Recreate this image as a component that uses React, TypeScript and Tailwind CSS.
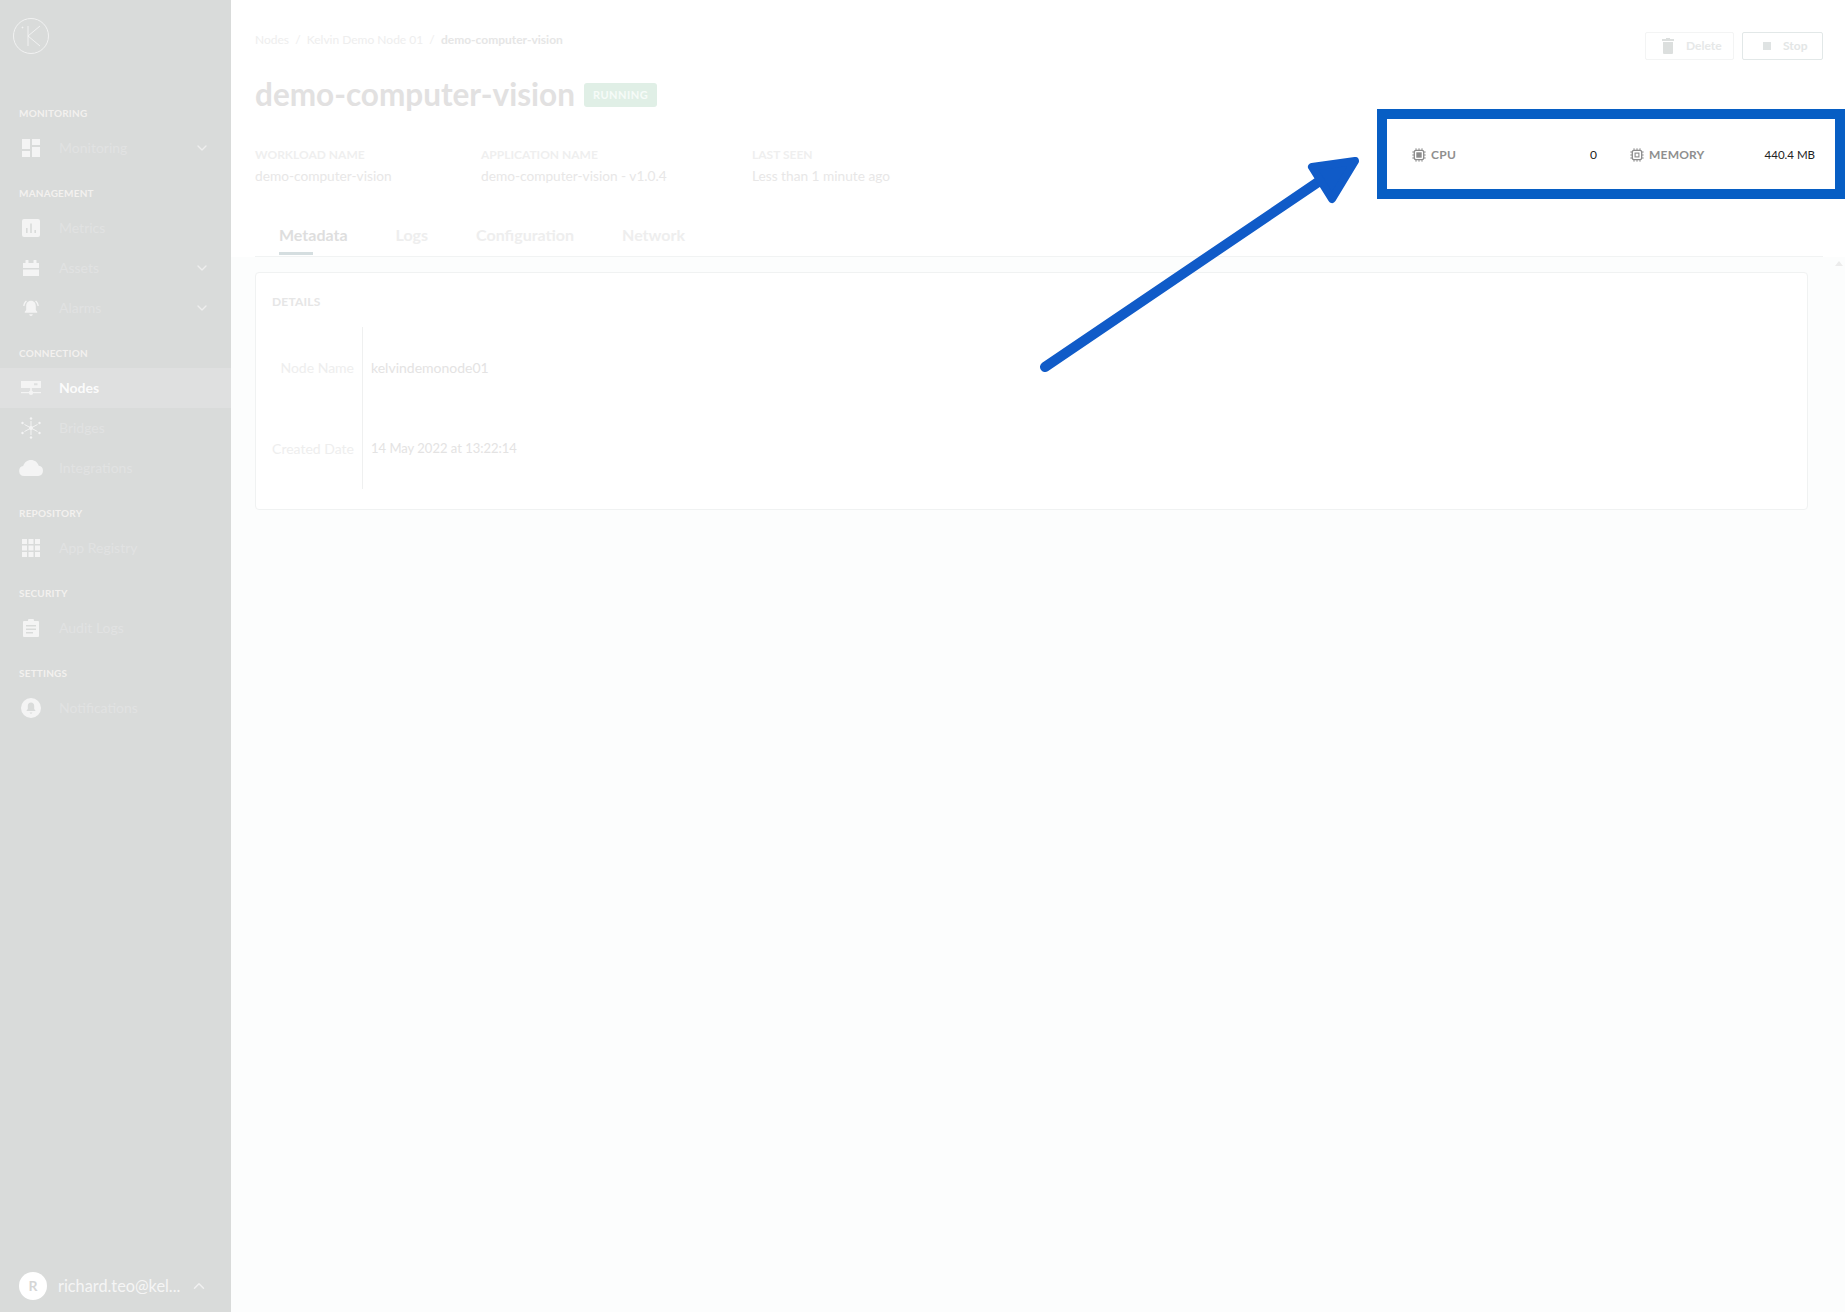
import React from "react";
import { ChevronDown, ChevronUp } from "lucide-react";

type NavItem = { label: string; icon: React.ReactNode; chevron?: boolean; active?: boolean };
type NavSection = { title: string; items: NavItem[] };

const IconDashboard = () => (
  <svg width="18" height="18" viewBox="0 0 18 18" fill="currentColor">
    <rect x="0" y="0" width="8" height="10" />
    <rect x="10" y="0" width="8" height="6" />
    <rect x="0" y="12" width="8" height="6" />
    <rect x="10" y="8" width="8" height="10" />
  </svg>
);

const IconMetrics = () => (
  <svg width="18" height="18" viewBox="0 0 18 18">
    <rect width="18" height="18" rx="2" fill="currentColor" />
    <rect x="4" y="9" width="1.6" height="5" fill="#d9dbda" />
    <rect x="8.2" y="4.5" width="1.6" height="9.5" fill="#d9dbda" />
    <rect x="12.4" y="11" width="1.6" height="3" fill="#d9dbda" />
  </svg>
);

const IconAssets = () => (
  <svg width="16" height="16" viewBox="0 0 16 16" fill="currentColor">
    <path d="M0 3h2.500V.5a.5.5 0 0 1 .5-.5h2a.5.5 0 0 1 .5.5V3h5V.5a.5.5 0 0 1 .5-.5h2a.5.5 0 0 1 .5.5V3H16v5H0z" />
    <rect x="0" y="9.500" width="16" height="6.500" />
  </svg>
);

const IconAlarm = () => (
  <svg width="16" height="16" viewBox="0 0 16 16" fill="currentColor">
    <path d="M8 .8c3 0 4.800 2.400 4.800 5.400v3.800l1.400 1.700v1.100H1.800v-1.100l1.400-1.700V6.200C3.200 3.200 5 .8 8 .8z" />
    <path d="M6.300 14.200h3.400c0 1-.8 1.700-1.700 1.700s-1.700-.7-1.700-1.700z" />
    <path d="M3 .6l.9 1C2.500 2.800 1.700 4.300 1.500 6L.2 5.900C.4 3.700 1.500 1.800 3 .6zM13 .6c1.500 1.200 2.600 3.100 2.800 5.300l-1.300.1c-.2-1.700-1-3.200-2.400-4.400z" />
  </svg>
);

const IconNodes = () => (
  <svg width="20" height="14" viewBox="0 0 20 14" fill="currentColor">
    <path d="M0 0h20v7H0zM13 2.200v2h3.500v-2z" fillRule="evenodd" />
    <rect x="0" y="11" width="20" height="1.200" />
    <rect x="9.200" y="7" width="1.600" height="4" />
    <circle cx="10" cy="11.700" r="2.200" />
  </svg>
);

const IconBridges = () => (
  <svg width="20" height="22" viewBox="0 0 20 22" fill="currentColor" stroke="currentColor">
    <path d="M10 4v14M3.500 7.500l13 7M16.500 7.500l-13 7" strokeWidth="1" />
    <circle cx="10" cy="11" r="2" stroke="none" />
    <circle cx="10" cy="1.500" r="1.200" stroke="none" />
    <circle cx="10" cy="20.500" r="1.200" stroke="none" />
    <circle cx="1.500" cy="6" r="1.200" stroke="none" />
    <circle cx="18.500" cy="6" r="1.200" stroke="none" />
    <circle cx="1.500" cy="16" r="1.200" stroke="none" />
    <circle cx="18.500" cy="16" r="1.200" stroke="none" />
  </svg>
);

const IconCloud = () => (
  <svg width="24" height="16" viewBox="0 0 24 16" fill="currentColor">
    <path d="M5 16a5 5 0 0 1-.8-9.900C5.200 2.500 8.200 0 12 0c3.700 0 6.700 2.400 7.700 5.700A5.200 5.200 0 0 1 19.200 16z" />
  </svg>
);

const IconApps = () => (
  <svg width="18" height="18" viewBox="0 0 18 18" fill="currentColor">
    {[0, 6.5, 13].map((y) =>
      [0, 6.5, 13].map((x) => <rect key={`${x}-${y}`} x={x} y={y} width="5" height="5" />)
    )}
  </svg>
);

const IconAudit = () => (
  <svg width="16" height="18" viewBox="0 0 16 18">
    <path
      d="M1 2h4a3 3 0 0 1 6 0h4a1 1 0 0 1 1 1v14a1 1 0 0 1-1 1H1a1 1 0 0 1-1-1V3a1 1 0 0 1 1-1z"
      fill="currentColor"
    />
    <rect x="3" y="6" width="10" height="1.500" fill="#d9dbda" />
    <rect x="3" y="9.500" width="10" height="1.500" fill="#d9dbda" />
    <rect x="3" y="13" width="7" height="1.500" fill="#d9dbda" />
  </svg>
);

const IconBellCircle = () => (
  <svg width="20" height="20" viewBox="0 0 20 20">
    <circle cx="10" cy="10" r="10" fill="currentColor" />
    <path
      d="M10 4.500c2 0 3.200 1.500 3.200 3.500v3l1.200 1.500v.5H5.600v-.5L6.800 11V8c0-2 1.200-3.500 3.200-3.500zM8.700 14.500h2.600c0 .7-.6 1.200-1.300 1.200s-1.300-.5-1.300-1.200z"
      fill="#d9dbda"
    />
  </svg>
);

const IconChip = ({ hollow }: { hollow?: boolean }) => (
  <svg width="14" height="14" viewBox="0 0 14 14" className="text-[#8c8c8c]">
    <path
      d="M4 .3v2.500M7 .3v2.500M10 .3v2.500M4 11.200v2.500M7 11.200v2.500M10 11.200v2.500M.3 4h2.500M.3 7h2.500M.3 10h2.500M11.200 4h2.500M11.200 7h2.500M11.200 10h2.500"
      stroke="currentColor"
      strokeWidth="1"
    />
    <rect x="2.300" y="2.300" width="9.400" height="9.400" rx="1.800" fill="#fff" stroke="currentColor" strokeWidth="1.300" />
    {hollow ? (
      <rect x="5.100" y="5.100" width="3.800" height="3.800" fill="none" stroke="currentColor" strokeWidth="1.100" />
    ) : (
      <rect x="4.300" y="4.300" width="5.400" height="5.400" fill="currentColor" />
    )}
  </svg>
);

const sections: NavSection[] = [
  { title: "MONITORING", items: [{ label: "Monitoring", icon: <IconDashboard />, chevron: true }] },
  {
    title: "MANAGEMENT",
    items: [
      { label: "Metrics", icon: <IconMetrics /> },
      { label: "Assets", icon: <IconAssets />, chevron: true },
      { label: "Alarms", icon: <IconAlarm />, chevron: true },
    ],
  },
  {
    title: "CONNECTION",
    items: [
      { label: "Nodes", icon: <IconNodes />, active: true },
      { label: "Bridges", icon: <IconBridges /> },
      { label: "Integrations", icon: <IconCloud /> },
    ],
  },
  { title: "REPOSITORY", items: [{ label: "App Registry", icon: <IconApps /> }] },
  { title: "SECURITY", items: [{ label: "Audit Logs", icon: <IconAudit /> }] },
  { title: "SETTINGS", items: [{ label: "Notifications", icon: <IconBellCircle /> }] },
];

const meta = [
  { label: "WORKLOAD NAME", value: "demo-computer-vision", width: "w-[226px]" },
  { label: "APPLICATION NAME", value: "demo-computer-vision - v1.0.4", width: "w-[271px]" },
  { label: "LAST SEEN", value: "Less than 1 minute ago", width: "w-[200px]" },
];

function Sidebar() {
  return (
    <aside className="flex h-[1312px] w-[231px] shrink-0 flex-col bg-[#d9dbda]">
      <div className="flex h-[88px] items-start pl-[13px] pt-[18px]">
        <svg width="36" height="36" viewBox="0 0 36 36" fill="none" stroke="#f7f7f7" strokeWidth="0.8">
          <circle cx="18" cy="18" r="17.500" />
          <path d="M15 8v20M27 8l-12 10 12 10" />
          <circle cx="9.500" cy="9.500" r="0.500" fill="#f7f7f7" />
        </svg>
      </div>
      {sections.map((section) => (
        <div key={section.title}>
          <div className="h-10 pl-[19px] pt-[18px] text-[10px] font-bold leading-[14px] tracking-[0.2px] text-[#f3f1ef]">
            {section.title}
          </div>
          {section.items.map((item) => (
            <div
              key={item.label}
              className={`flex h-10 items-center ${item.active ? "bg-[#dfe0e0]" : ""}`}
            >
              <div className="flex w-[59px] shrink-0 justify-center pl-[3px] text-[#f4f4f4]">{item.icon}</div>
              <span className={`text-sm ${item.active ? "font-bold text-[#fbfbfb]" : "text-[#e1e2e2]"}`}>
                {item.label}
              </span>
              {item.chevron && <ChevronDown className="ml-auto mr-[21px] text-[#eeeeee]" size={16} />}
            </div>
          ))}
        </div>
      ))}
      <div className="mt-auto flex h-10 items-start pl-[19px]">
        <div className="flex h-7 w-7 items-center justify-center rounded-full bg-white text-sm font-bold text-[#d5d6d6]">
          R
        </div>
        <span className="ml-[11px] mt-[2px] whitespace-nowrap text-[16.3px] leading-6 text-[#f5f5f5]">
          richard.teo@kel...
        </span>
        <ChevronUp className="ml-[10px] mt-[5px] text-[#f0f0f0]" size={18} />
      </div>
    </aside>
  );
}

function Header() {
  return (
    <div className="h-[257px] bg-white pl-[24px] pr-[22px]">
      <div className="h-full border-b border-[#f1f3f3]">
        <div className="flex justify-between">
          <div className="pt-[32px] text-[12px] leading-4 text-[#eeeeee]">
            Nodes&nbsp;&nbsp;/&nbsp;&nbsp;Kelvin Demo Node 01&nbsp;&nbsp;/&nbsp;&nbsp;
            <span className="font-bold text-[#e6e6e6]">demo-computer-vision</span>
          </div>
          <div className="flex gap-2 pt-[32px]">
            <button className="flex h-7 w-[89px] items-center rounded-[2px] border border-[#f3f4f4] pl-4 text-xs font-bold text-[#e6e8e8]">
              <svg width="12" height="16" viewBox="0 0 12 16" fill="#dcdfde">
                <path d="M4 0h4v1h4v2H0V1h4zM1 4h10v11a1 1 0 0 1-1 1H2a1 1 0 0 1-1-1z" />
              </svg>
              <span className="ml-3">Delete</span>
            </button>
            <button className="flex h-7 w-[81px] items-center rounded-[2px] border border-[#e2e8e8] pl-5 text-xs font-bold text-[#e3e6e6]">
              <span className="h-2 w-2 bg-[#dfe3e3]" />
              <span className="ml-3">Stop</span>
            </button>
          </div>
        </div>
        <div className="mt-[14px] flex items-center gap-[9px]">
          <h1 className="text-[31.5px] font-bold leading-[40px] text-[#e2e1e1]">demo-computer-vision</h1>
          <span className="mt-[2px] rounded-[3px] bg-[#e0efe6] px-[9px] py-[4px] text-[11px] font-bold leading-4 tracking-[0.5px] text-[#f6fbf8]">
            RUNNING
          </span>
        </div>
        <div className="mt-[33px] flex">
          {meta.map((m) => (
            <div key={m.label} className={m.width}>
              <div className="text-xs font-bold leading-4 text-[#efefef]">{m.label}</div>
              <div className="mt-[5px] text-[13.7px] leading-4 text-[#e8e7e7]">{m.value}</div>
            </div>
          ))}
        </div>
        <div className="ml-[24px] mt-[41px] flex gap-[48px] text-base font-bold leading-5">
          <div className="relative text-[#dedede]">
            Metadata
            <div className="absolute -bottom-[10px] left-0 h-[3px] w-1/2 bg-[#d5dee0]" />
          </div>
          <div className="text-[#eeeeee]">Logs</div>
          <div className="text-[#eeeeee]">Configuration</div>
          <div className="text-[#eeeeee]">Network</div>
        </div>
      </div>
    </div>
  );
}

function DetailsCard() {
  return (
    <div className="mr-[37px] mt-[15px] h-[238px] rounded-[4px] border border-[#f0f2f2] bg-white pl-[16px]">
      <div className="pt-[21px] text-xs font-bold leading-4 tracking-[0.2px] text-[#e6e6e6]">DETAILS</div>
      <div className="mt-[17px] w-fit">
        <div className="flex h-[81px] items-center">
          <div className="w-[90px] whitespace-nowrap pr-2 text-right text-sm text-[#eeeeee]">Node Name</div>
          <div className="flex h-full items-center border-l border-[#eff0f0] pl-2 text-sm text-[#e4e3e3]">
            kelvindemonode01
          </div>
        </div>
        <div className="flex h-[81px] items-center">
          <div className="w-[90px] whitespace-nowrap pr-2 text-right text-sm text-[#eeeeee]">Created Date</div>
          <div className="flex h-full items-center border-l border-[#eff0f0] pl-2 text-[13px] text-[#e4e3e3]">
            14 May 2022 at 13:22:14
          </div>
        </div>
      </div>
    </div>
  );
}

function Annotation() {
  return (
    <>
      <div className="absolute left-[1377px] top-[109px] flex h-[90px] w-[468px] items-center border-[10px] border-[#075ec4] bg-white pt-[2px] text-xs">
        <div className="ml-[25px] flex w-[185px] items-center">
          <IconChip />
          <span className="ml-[5px] font-bold tracking-[0.3px] text-[#8f8f8f]">CPU</span>
          <span className="ml-auto text-[#222222]">0</span>
        </div>
        <div className="ml-[33px] flex w-[185px] items-center">
          <IconChip hollow />
          <span className="ml-[5px] font-bold tracking-[0.2px] text-[#8f8f8f]">MEMORY</span>
          <span className="ml-auto text-[11.5px] text-[#222222]">440.4 MB</span>
        </div>
      </div>
      {/* faint scroll arrow at the top of the content pane */}
      <div className="absolute left-[1835px] top-[261px] h-0 w-0 border-x-[4px] border-b-[5px] border-x-transparent border-b-[#ececec]" />
      <svg className="absolute left-0 top-0 blur-[0.4px]" width="1845" height="1312" fill="none">
        <path d="M1045 367L1330 174" stroke="#105bc8" strokeWidth="10" strokeLinecap="round" />
        <path
          d="M1312 167L1355 161L1332 199Z"
          fill="#105bc8"
          stroke="#105bc8"
          strokeWidth="8"
          strokeLinejoin="round"
        />
      </svg>
    </>
  );
}

export default function App() {
  return (
    <div className="relative flex h-[1312px] w-[1845px] overflow-hidden bg-[#fcfdfd] font-['Lato',sans-serif]">
      <Sidebar />
      <main className="min-w-0 flex-1">
        <Header />
        <div className="pl-[24px]">
          <DetailsCard />
        </div>
      </main>
      <Annotation />
    </div>
  );
}
